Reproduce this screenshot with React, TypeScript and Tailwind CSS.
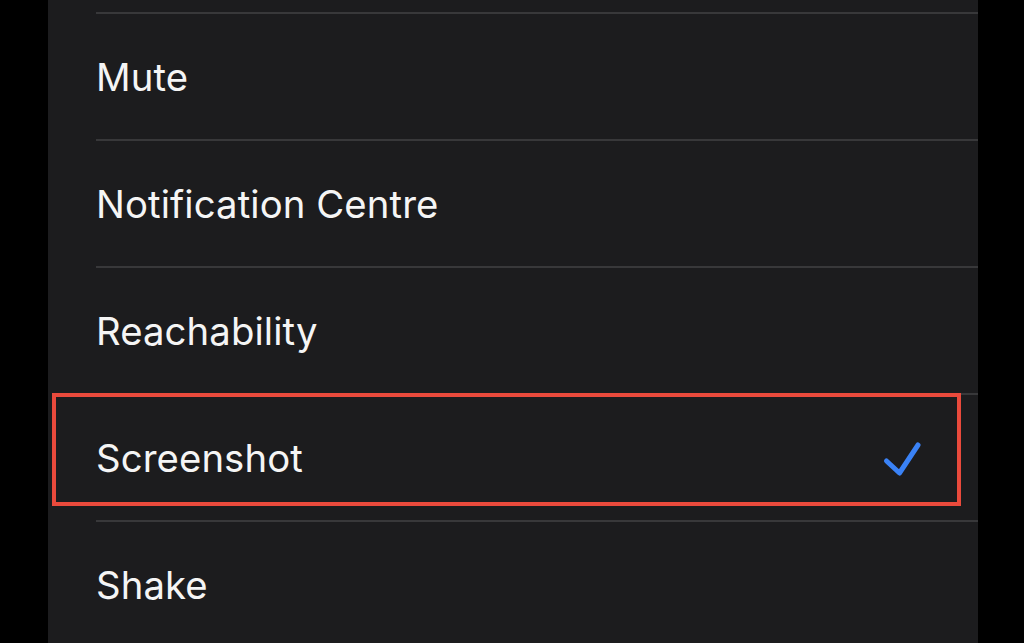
import React from "react";

const items = ["Mute", "Notification Centre", "Reachability", "Screenshot", "Shake"];
const selected = "Screenshot";

function Check() {
  return (
    <svg width="40" height="40" viewBox="0 0 40 40" fill="none" className="mr-[56px]">
      <path
        d="M4.5 22 L17.5 34 L36 6"
        stroke="#3a82f6"
        strokeWidth="5"
        strokeLinecap="round"
        strokeLinejoin="round"
      />
    </svg>
  );
}

export default function App() {
  return (
    <div className="w-[1024px] h-[643px] bg-black flex overflow-hidden">
      <div className="ml-[48px] w-[930px] h-full bg-[#1c1c1e] flex flex-col">
        <div className="h-[12px] shrink-0" />
        {items.map((name) => (
          <div key={name} className="relative shrink-0">
            <div className="ml-[48px] h-[2px] bg-[#38383a]" />
            <div className="h-[125px] pl-[48px] pt-[3px] flex items-center justify-between">
              <span
                className="text-[38.3px] text-[#f5f5f5] tracking-[0.1px]"
                style={{ fontFamily: "Inter, 'Liberation Sans', sans-serif" }}
              >
                {name}
              </span>
              {name === selected && <Check />}
            </div>
            {name === selected && (
              <div className="absolute left-[4px] top-0 w-[909px] h-[113px] border-[4px] border-[#ea4a3c] pointer-events-none" />
            )}
          </div>
        ))}
      </div>
    </div>
  );
}
